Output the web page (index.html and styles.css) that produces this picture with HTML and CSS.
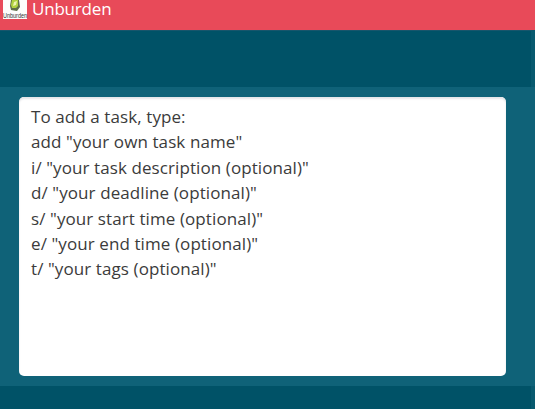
FILE: index.html
```html
<!DOCTYPE html>
<html lang="en">
<head>
<meta charset="utf-8">
<title>Unburden</title>
<link rel="stylesheet" href="styles.css">
</head>
<body>
<div class="window">
  <header class="titlebar">
    <div class="logo">
      <svg class="logo-mark" viewBox="0 0 24 11" aria-hidden="true">
        <path d="M8 0h8l1 7-3 4-6-1-1-4z" fill="#5f7048"/>
        <path d="M9 0h6l0 6-2 2-4 0-1-3z" fill="#b0d23f"/>
        <path d="M11 2l3-1-1 4-3 1z" fill="#eef5b0"/>
      </svg>
      <span class="logo-name">Unburden</span>
    </div>
    <h1 class="title">Unburden</h1>
  </header>
  <div class="command"></div>
  <main class="result">
    <div class="card">
      <p>To add a task, type:</p>
      <p>add "your own task name"</p>
      <p>i/ "your task description (optional)"</p>
      <p>d/ "your deadline (optional)"</p>
      <p>s/ "your start time (optional)"</p>
      <p>e/ "your end time (optional)"</p>
      <p>t/ "your tags (optional)"</p>
    </div>
  </main>
  <footer class="bottom"></footer>
</div>
</body>
</html>
```
FILE: styles.css
```css
* { box-sizing: border-box; }
body { margin: 0; font-family: "Open Sans", "Noto Sans", sans-serif; }
.window {
  height: 409px;
  display: grid;
  grid-template-rows: 30px 57px 299px 23px;
  background: #0f6278;
  overflow: hidden;
}
.titlebar {
  display: flex;
  align-items: flex-start;
  gap: 5px;
  padding-left: 3px;
  background: #e84a59;
}
.logo {
  width: 24px;
  height: 19px;
  background: #fdfdfb;
  display: flex;
  flex-direction: column;
  align-items: center;
}
.logo-mark { width: 24px; height: 11px; flex: none; }
.logo-name {
  font: 5.5px/8px "Liberation Sans", sans-serif;
  color: #333;
  transform: scaleY(1.3);
}
.title {
  margin: 0;
  font-size: 17px;
  line-height: 18px;
  font-weight: 400;
  letter-spacing: -0.2px;
  color: #fff;
}
.command, .bottom {
  background: #005267;
  border-right: 4px solid #085a6f;
}
.command { border-top: 1px solid #17566c; }
.result { padding: 10px 29px 10px 19px; }
.card {
  height: 279px;
  padding: 7px 12px;
  border-radius: 5px;
  background: #fff;
  box-shadow: inset 0 2px 2px #e4e5e8;
  color: #3b3b3b;
  font-size: 17px;
  line-height: 25.4px;
  letter-spacing: 0.09px;
}
.card p { margin: 0; white-space: nowrap; }
```
